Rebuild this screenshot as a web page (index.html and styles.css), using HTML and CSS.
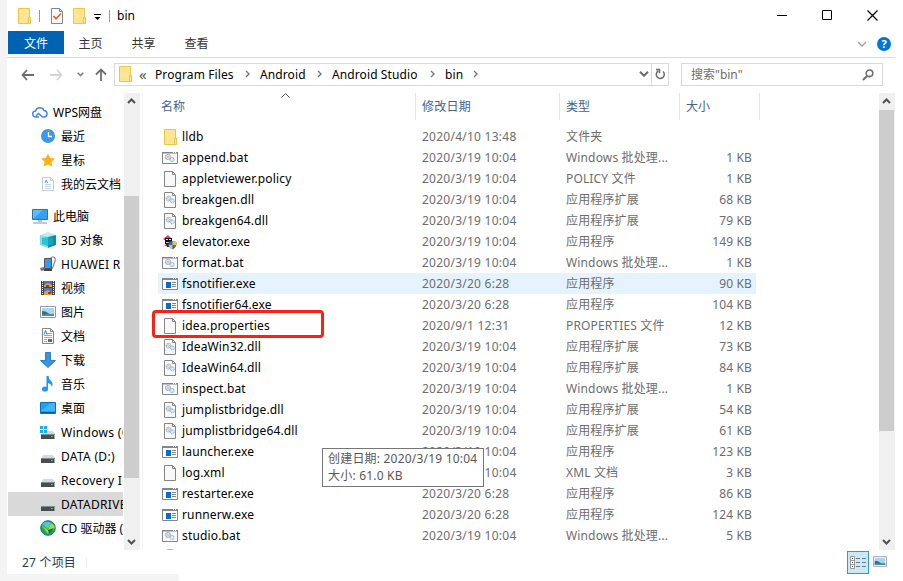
FILE: index.html
```html
<!DOCTYPE html>
<html lang="zh-CN">

<head>
    <meta charset="UTF-8">
    <meta name="viewport" content="width=device-width, initial-scale=1.0">
    <title>bin</title>
    <link rel="stylesheet" href="styles.css">
</head>

<body>
    <!-- Shared icons -->
    <svg class="sprite" width="0" height="0">
        <symbol id="i-folder" viewBox="0 0 16 16">
            <path d="M2.5.5h11v9h1v6h-12z" fill="#ffe591" stroke="#ecc648" />
            <path d="M12.5 15.5v-6h2v6z" fill="#ffe591" stroke="#ecc648" />
        </symbol>
        <symbol id="i-file" viewBox="0 0 16 16">
            <path d="M2.5.5h8l3 3v12h-11z" fill="#f9f9f9" stroke="#858585" />
            <path d="M10.5.5v3h3" fill="none" stroke="#858585" />
        </symbol>
        <symbol id="i-gears" viewBox="0 0 16 16">
            <circle cx="6" cy="6" r="2.5" fill="#eceeef" stroke="#9aa2a8" stroke-width="1.2" stroke-dasharray="1.2 .5" />
            <circle cx="6" cy="6" r=".9" fill="#fff" stroke="#9aa2a8" stroke-width=".6" />
            <circle cx="10" cy="8.500" r="2" fill="#e2eff8" stroke="#94b8d0" stroke-width="1.200" stroke-dasharray="1.100 .5" />
        </symbol>
        <symbol id="i-bat" viewBox="0 0 16 16">
            <path d="M.5 2.5h15v11H.5z" fill="#fafafa" stroke="#80868b" />
            <path d="M0 2h16v1.500H0z" fill="#80868b" />
            <path d="M11 2.5h1M13 2.5h1" stroke="#fff" />
            <use href="#i-gears" y="1" width="16" height="16" />
        </symbol>
        <symbol id="i-dll" viewBox="0 0 16 16">
            <use href="#i-file" width="16" height="16" />
            <use href="#i-gears" x="1" y="1" width="15" height="15" />
        </symbol>
        <symbol id="i-exe" viewBox="0 0 16 16">
            <path d="M.5 2.5h15v11H.5z" fill="#fff" stroke="#80868b" />
            <path d="M0 2h16v2H0z" fill="#80868b" />
            <path d="M11 2.5h1M13 2.5h1" stroke="#fff" />
            <path d="M4 6h5v6H4z" fill="#0a6cce" />
            <path d="M10 6.5h4M10 8.5h4M10 10.5h4" stroke="#80868b" />
        </symbol>
        <symbol id="i-elevator" viewBox="0 0 16 16">
            <path d="M1 5l5-4 3 3-5 3z" fill="#f5316f" />
            <path d="M3 4h7v6H3z" fill="#111" />
            <path d="M4 5.500h2M7 5.500h2M4 8.500h3" stroke="#ddd" />
            <path d="M2 11l5-1 1 3-4-1z" fill="#c42a4f" />
            <path d="M4 10h4v3H5z" fill="#333" />
            <path d="M10.500 7l4 1v3q-1 3-4 4.500-3-1.500-4-4.500V8z" fill="#1d6fc6" />
            <path d="M10.500 7l4 1v3h-4zM6.500 11h4v4.500q-3-1.500-4-4.500z" fill="#fcc12c" />
        </symbol>
        <symbol id="i-drive" viewBox="0 0 16 16">
            <path d="M3.500 7h9L15 10H1z" fill="#d5d8da" />
            <path d="M1 10h13.500v5H1z" fill="#4a4d50" />
            <path d="M1 10.500h13.500" stroke="#858a8d" />
            <path d="M11 12h1.500v1H11z" fill="#5dee6b" />
        </symbol>
        <symbol id="i-picture" viewBox="0 0 16 12">
            <path d="M.5.5h15v11H.5z" fill="#fff" stroke="#999" />
            <path d="M2 2h12v8H2z" fill="#a7d5f5" />
            <path d="M2 5q4 0 6 2t6 1v2H2z" fill="#3c7062" />
            <path d="M2 8.500q6-1 12 0V10H2z" fill="#4e8db8" />
        </symbol>
        <symbol id="i-up" viewBox="0 0 16 16">
            <path d="M4 10l3.500-3.500L11 10" fill="none" stroke="#505050" stroke-width="2" />
        </symbol>
        <symbol id="i-down" viewBox="0 0 16 16">
            <path d="M4 6l3.500 3.500L11 6" fill="none" stroke="#505050" stroke-width="2" />
        </symbol>
        <symbol id="i-sep" viewBox="0 0 6 10">
            <path d="M1 2l3 3-3 3" fill="none" stroke="#777" stroke-width="1.4" />
        </symbol>
    </svg>

    <div class="desktop">
        <div class="window">
            <div class="title-bar">
                <svg class="icon"><use href="#i-folder" /></svg>
                <span class="bar first"></span>
                <svg class="icon check" viewBox="0 0 16 16">
                    <path d="M2.5.5h8l3 3v12h-11z" fill="#f9f9f9" stroke="#858585" />
                    <path d="M10.5.5v3h3" fill="none" stroke="#858585" />
                    <path d="M4.5 8l2.500 2.800 5-5.300" fill="none" stroke="#ef5b20" stroke-width="1.6" />
                </svg>
                <svg class="icon folder-two"><use href="#i-folder" /></svg>
                <svg class="drop" width="7" height="6" viewBox="0 0 7 6">
                    <path d="M0 .5h7" stroke="#000" />
                    <path d="M.5 3h6l-3 3z" />
                </svg>
                <span class="bar second"></span>
                <span class="title">bin</span>
                <div class="buttons">
                    <svg width="11" height="11"><path d="M0 5.500h10" stroke="#000" /></svg>
                    <svg width="11" height="11"><path d="M.5.5h9v9h-9z" fill="none" stroke="#000" /></svg>
                    <svg width="11" height="11"><path d="M.5.5l10 10M10.500.5l-10 10" stroke="#000" stroke-width="1.2" /></svg>
                </div>
            </div>

            <div class="tabs">
                <span class="tab active">文件</span>
                <span class="tab">主页</span>
                <span class="tab">共享</span>
                <span class="tab">查看</span>
                <div class="tabs-right">
                    <svg width="10" height="6"><path d="M1 1l4 4 4-4" fill="none" stroke="#a0a0a0" stroke-width="1.3" /></svg>
                    <span class="help">?</span>
                </div>
            </div>

            <div class="nav">
                <div class="arrows">
                    <svg width="13" height="12"><path d="M6 1L1.500 6 6 11M1.500 6H13" fill="none" stroke="#6e6e6e" stroke-width="1.8" /></svg>
                    <svg width="13" height="12"><path d="M7 1l4.500 5L7 11M11.500 6H0" fill="none" stroke="#d5d5d5" stroke-width="1.8" /></svg>
                    <svg width="7" height="5"><path d="M.7.7l2.800 2.800L6.300.7" fill="none" stroke="#808080" stroke-width="1.6" /></svg>
                    <svg width="12" height="13"><path d="M1 6.500L6 1.500l5 5M6 1.500V13" fill="none" stroke="#6e6e6e" stroke-width="1.8" /></svg>
                </div>
                <div class="address">
                    <svg class="icon"><use href="#i-folder" /></svg>
                    <span class="more">«</span>
                    <span class="crumb program">Program Files</span>
                    <svg class="sep"><use href="#i-sep" /></svg>
                    <span class="crumb android">Android</span>
                    <svg class="sep"><use href="#i-sep" /></svg>
                    <span class="crumb studio">Android Studio</span>
                    <svg class="sep"><use href="#i-sep" /></svg>
                    <span class="crumb last">bin</span>
                    <svg class="sep"><use href="#i-sep" /></svg>
                    <div class="address-right">
                        <svg width="10" height="6"><path d="M1 .8L5 4.800l4-4" fill="none" stroke="#6e6e6e" stroke-width="2" /></svg>
                        <span class="refresh">
                            <svg width="11" height="12"><path d="M8 3.500A4 4 0 1 1 3.200 3M1 1.500h3.500v3.700" fill="none" stroke="#6e6e6e" stroke-width="1.5" /></svg>
                        </span>
                    </div>
                </div>
                <div class="search">
                    <span>搜索"bin"</span>
                    <svg width="12" height="12"><circle cx="7.5" cy="4.3" r="3.3" fill="none" stroke="#6e6e6e" stroke-width="1.6" /><path d="M5 7L1 11" stroke="#6e6e6e" stroke-width="2" /></svg>
                </div>
            </div>

            <div class="main">
                <div class="tree">
                    <div class="node root">
                        <svg class="icon" viewBox="0 0 16 16"><path d="M7 13H4A3 3 0 0 1 3.500 7 4.500 4.500 0 0 1 12 6.500a3.300 3.300 0 0 1 .5 6.500h-2L6.500 9.500 4 12" fill="none" stroke="#4a83ee" stroke-width="1.5" /></svg>
                        <span>WPS网盘</span>
                    </div>
                    <div class="node">
                        <svg class="icon" viewBox="0 0 16 16"><circle cx="8" cy="8" r="7" fill="#3d99e8" /><path d="M8.500 4v4.500H12" fill="none" stroke="#fff" stroke-width="1.3" /></svg>
                        <span>最近</span>
                    </div>
                    <div class="node">
                        <svg class="icon" viewBox="0 0 16 16"><path d="M8 1.500l2.100 4.400 4.900.6-3.600 3.400 1 4.900L8 12.400l-4.400 2.400 1-4.900L1 6.500l4.900-.6z" fill="#ffb017" /></svg>
                        <span>星标</span>
                    </div>
                    <div class="node">
                        <svg class="icon" viewBox="0 0 16 16"><path d="M2.500 1.500h8l3 3v10h-11z" fill="#fff" stroke="#c8ccd0" /><path d="M10.500 1.500v3h3" fill="none" stroke="#c8ccd0" /><path d="M5 8.500h6M5 10.500h6M5 12.500h6" stroke="#c0d7ee" /><path d="M5 7l1.300-3L7.500 7" fill="none" stroke="#5096dc" /></svg>
                        <span>我的云文档</span>
                    </div>
                    <div class="node root computer">
                        <svg class="icon" viewBox="0 0 16 16"><path d="M.5 1.500h15v10H.5z" fill="#5abcf8" stroke="#38729b" /><path d="M1 11L11 2h4v9z" fill="#35a0ee" /><path d="M6 12h4v2H6z" fill="#b8c6d0" /><path d="M1 15h14" stroke="#8098a8" /></svg>
                        <span>此电脑</span>
                    </div>
                    <div class="node">
                        <svg class="icon" viewBox="0 0 16 16"><path d="M0 3l8-3 8 3-8 3z" fill="#b9eff4" /><path d="M0 3l8 2v11l-8-3z" fill="#7fdde6" /><path d="M16 3L8 5v11l8-3z" fill="#0a8fa6" /><path d="M2 6l6-1v9l-6-2z" fill="#31c1d3" /><path d="M8 5l5 1v6l-5 2z" fill="#16a5ba" /></svg>
                        <span>3D 对象</span>
                    </div>
                    <div class="node latin">
                        <svg class="icon" viewBox="0 0 16 16"><path d="M10 5q0-4 3-4t2 4-3 8" fill="none" stroke="#888" stroke-width="1.2" /><path d="M4.500 2.500h7v10h-7z" fill="#2d9fee" stroke="#555" /><path d="M0 12l4-1 1 3-4 1z" fill="#777" /><path d="M4 13h8v2H4z" fill="#444" /></svg>
                        <span>HUAWEI R</span>
                    </div>
                    <div class="node">
                        <svg class="icon" viewBox="0 0 16 16"><path d="M1 1h14v14H1z" fill="#444" /><path d="M4 1h8v6H4zM4 8h8v7H4z" fill="#4278ce" /><path d="M4 5l4-2 4 2v2H4zM4 12l4-2 4 3v2H4z" fill="#e2a22e" /><path d="M6 5h3v2H6zM8 12h3v2H8z" fill="#a6342a" /><path d="M2.500 1v14M13.500 1v14" stroke="#fff" stroke-dasharray="1 1" /></svg>
                        <span>视频</span>
                    </div>
                    <div class="node">
                        <svg class="icon"><use href="#i-picture" /></svg>
                        <span>图片</span>
                    </div>
                    <div class="node">
                        <svg class="icon" viewBox="0 0 16 16"><path d="M2.500.5h8l3 3v12h-11z" fill="#fff" stroke="#858585" /><path d="M10.500.5v3h3" fill="none" stroke="#858585" /><path d="M7 5.500h5M4 7.500h8M4 9.500h8M4 11.500h3M4 13.500h3" stroke="#71b5e0" /><path d="M4 6.500l1.500-4 1.500 4" fill="none" stroke="#1687ce" /><path d="M8 11h4v3H8z" fill="#557078" /></svg>
                        <span>文档</span>
                    </div>
                    <div class="node">
                        <svg class="icon" viewBox="0 0 16 16"><path d="M5.500.5h5v8h5L8 15.500.5 8.500h5z" fill="#3794e3" stroke="#2d7fc9" /></svg>
                        <span>下载</span>
                    </div>
                    <div class="node">
                        <svg class="icon" viewBox="0 0 16 16"><ellipse cx="5" cy="13" rx="3" ry="2.6" fill="#169bf5" /><path d="M6.500 0h2q0 3 2.500 5t1 6q-.5-3-4-4v6H6.500z" fill="#169bf5" /></svg>
                        <span>音乐</span>
                    </div>
                    <div class="node">
                        <svg class="icon" viewBox="0 0 16 16"><path d="M.5 2.500h15v11H.5z" fill="#1ba1f5" stroke="#0b70b8" /><path d="M1 11L11 3h4v8z" fill="#42b5fa" /><path d="M1 12.500h14" stroke="#085c9b" /></svg>
                        <span>桌面</span>
                    </div>
                    <div class="node latin">
                        <svg class="icon" viewBox="0 0 16 16"><use href="#i-drive" width="16" height="16" /><path d="M0 2h3v3H0zM4 2h3v3H4zM0 6h3v3H0zM4 6h3v3H4z" fill="#16b0ee" /></svg>
                        <span>Windows (C:)</span>
                    </div>
                    <div class="node latin">
                        <svg class="icon"><use href="#i-drive" /></svg>
                        <span>DATA (D:)</span>
                    </div>
                    <div class="node latin">
                        <svg class="icon"><use href="#i-drive" /></svg>
                        <span>Recovery Image</span>
                    </div>
                    <div class="node latin selected">
                        <svg class="icon"><use href="#i-drive" /></svg>
                        <span>DATADRIVE</span>
                    </div>
                    <div class="node">
                        <svg class="icon" viewBox="0 0 16 16"><circle cx="8" cy="8" r="7.3" fill="#1ba364" stroke="#17718a" /><path d="M1.500 5l6.500 5 3-7q3 1 4 5l-7 6z" fill="#a6db24" /><path d="M2 4q5-4 9-1L8 9z" fill="#57c4dd" /><path d="M8 10l6-2-5 6z" fill="#0b6c57" /></svg>
                        <span>CD 驱动器 (</span>
                    </div>
                </div>

                <div class="scroll tree-scroll">
                    <svg class="icon"><use href="#i-up" /></svg>
                    <div class="thumb"></div>
                    <svg class="icon"><use href="#i-down" /></svg>
                </div>

                <div class="files">
                    <div class="row head">
                        <span class="name">名称<svg class="sort" width="9" height="5"><path d="M.5 4.500l4-4 4 4" fill="none" stroke="#555" /></svg></span>
                        <span class="date">修改日期</span>
                        <span class="type">类型</span>
                        <span class="size">大小</span>
                    </div>
                    <div class="row"><span class="name"><svg class="icon"><use href="#i-folder" /></svg>lldb</span><span class="date">2020/4/10 13:48</span><span class="type">文件夹</span><span class="size"></span></div>
                    <div class="row"><span class="name"><svg class="icon"><use href="#i-bat" /></svg>append.bat</span><span class="date">2020/3/19 10:04</span><span class="type">Windows 批处理...</span><span class="size">1 KB</span></div>
                    <div class="row"><span class="name"><svg class="icon"><use href="#i-file" /></svg>appletviewer.policy</span><span class="date">2020/3/19 10:04</span><span class="type">POLICY 文件</span><span class="size">1 KB</span></div>
                    <div class="row"><span class="name"><svg class="icon"><use href="#i-dll" /></svg>breakgen.dll</span><span class="date">2020/3/19 10:04</span><span class="type">应用程序扩展</span><span class="size">68 KB</span></div>
                    <div class="row"><span class="name"><svg class="icon"><use href="#i-dll" /></svg>breakgen64.dll</span><span class="date">2020/3/19 10:04</span><span class="type">应用程序扩展</span><span class="size">79 KB</span></div>
                    <div class="row"><span class="name"><svg class="icon"><use href="#i-elevator" /></svg>elevator.exe</span><span class="date">2020/3/19 10:04</span><span class="type">应用程序</span><span class="size">149 KB</span></div>
                    <div class="row"><span class="name"><svg class="icon"><use href="#i-bat" /></svg>format.bat</span><span class="date">2020/3/19 10:04</span><span class="type">Windows 批处理...</span><span class="size">1 KB</span></div>
                    <div class="row hover"><span class="name"><svg class="icon"><use href="#i-exe" /></svg>fsnotifier.exe</span><span class="date">2020/3/20 6:28</span><span class="type">应用程序</span><span class="size">90 KB</span></div>
                    <div class="row"><span class="name"><svg class="icon"><use href="#i-exe" /></svg>fsnotifier64.exe</span><span class="date">2020/3/20 6:28</span><span class="type">应用程序</span><span class="size">104 KB</span></div>
                    <div class="row marked"><span class="name"><svg class="icon"><use href="#i-file" /></svg>idea.properties</span><span class="date">2020/9/1 12:31</span><span class="type">PROPERTIES 文件</span><span class="size">12 KB</span></div>
                    <div class="row"><span class="name"><svg class="icon"><use href="#i-dll" /></svg>IdeaWin32.dll</span><span class="date">2020/3/19 10:04</span><span class="type">应用程序扩展</span><span class="size">73 KB</span></div>
                    <div class="row"><span class="name"><svg class="icon"><use href="#i-dll" /></svg>IdeaWin64.dll</span><span class="date">2020/3/19 10:04</span><span class="type">应用程序扩展</span><span class="size">84 KB</span></div>
                    <div class="row"><span class="name"><svg class="icon"><use href="#i-bat" /></svg>inspect.bat</span><span class="date">2020/3/19 10:04</span><span class="type">Windows 批处理...</span><span class="size">1 KB</span></div>
                    <div class="row"><span class="name"><svg class="icon"><use href="#i-dll" /></svg>jumplistbridge.dll</span><span class="date">2020/3/19 10:04</span><span class="type">应用程序扩展</span><span class="size">54 KB</span></div>
                    <div class="row"><span class="name"><svg class="icon"><use href="#i-dll" /></svg>jumplistbridge64.dll</span><span class="date">2020/3/19 10:04</span><span class="type">应用程序扩展</span><span class="size">61 KB</span></div>
                    <div class="row"><span class="name"><svg class="icon"><use href="#i-exe" /></svg>launcher.exe</span><span class="date">2020/3/19 10:04</span><span class="type">应用程序</span><span class="size">123 KB</span></div>
                    <div class="row"><span class="name"><svg class="icon"><use href="#i-file" /></svg>log.xml</span><span class="date">2020/3/19 10:04</span><span class="type">XML 文档</span><span class="size">3 KB</span></div>
                    <div class="row"><span class="name"><svg class="icon"><use href="#i-exe" /></svg>restarter.exe</span><span class="date">2020/3/20 6:28</span><span class="type">应用程序</span><span class="size">86 KB</span></div>
                    <div class="row"><span class="name"><svg class="icon"><use href="#i-exe" /></svg>runnerw.exe</span><span class="date">2020/3/20 6:28</span><span class="type">应用程序</span><span class="size">124 KB</span></div>
                    <div class="row"><span class="name"><svg class="icon"><use href="#i-bat" /></svg>studio.bat</span><span class="date">2020/3/19 10:04</span><span class="type">Windows 批处理...</span><span class="size">5 KB</span></div>
                    <div class="row"><span class="name"><svg class="icon" viewBox="0 0 16 16"><circle cx="8" cy="8" r="8" fill="#3ddc84" /></svg></span></div>
                </div>

                <div class="scroll file-scroll">
                    <svg class="icon"><use href="#i-up" /></svg>
                    <div class="thumb"></div>
                    <svg class="icon"><use href="#i-down" /></svg>
                </div>
            </div>

            <div class="status">
                <span class="count">27 个项目</span>
                <div class="views">
                    <span class="view active">
                        <svg width="16" height="13"><path d="M.5.5h4v12h-4zM.5 4.500h4M.5 8.500h4" fill="#fff" stroke="#999" /><path d="M6 2.500h10M6 6.500h10M6 10.500h10" stroke="#6d7b82" stroke-dasharray="4 2" /><path d="M2 2h1v1H2zM2 6h1v1H2zM2 10h1v1H2z" fill="#444" /></svg>
                    </span>
                    <svg class="thumbs" width="14" height="11"><use href="#i-picture" /></svg>
                </div>
            </div>

            <div class="tooltip">创建日期: 2020/3/19 10:04<br>大小: 61.0 KB</div>
        </div>
        <div class="strip"></div>
    </div>
</body>

</html>
```
FILE: styles.css
```css
* {
    box-sizing: border-box;
}

body {
    margin: 0;
    background-color: #fff;
    color: #000;
    font-family: "Noto Sans", "Noto Sans CJK SC", sans-serif;
    font-size: 12px;
    line-height: 17px;
    overflow: hidden;
}

svg {
    display: block;
    flex-shrink: 0;
}

.sprite {
    position: absolute;
}

.icon {
    width: 16px;
    height: 16px;
}

.desktop {
    width: 903px;
    height: 581px;
    display: flex;
    flex-direction: column;
}

.window {
    position: relative;
    height: 574px;
    border-left: 7px solid #f4f4f4;
    display: flex;
    flex-direction: column;
}

.strip {
    width: 179px;
    height: 7px;
    background-color: #f4f4f4;
}

/* Title bar */
.title-bar {
    height: 31px;
    padding: 0 25px 0 9px;
    display: flex;
    align-items: center;
}

.bar {
    width: 1px;
    height: 12px;
    background-color: #999;
}

.bar.first {
    margin-left: 7px;
}

.check {
    margin-left: 9px;
}

.folder-two {
    margin-left: 6px;
}

.drop {
    margin-left: 7px;
    margin-top: 3px;
}

.bar.second {
    margin-left: 8px;
}

.title {
    margin-left: 7px;
}

.buttons {
    margin-left: auto;
    display: flex;
    gap: 34px;
}

/* Ribbon tabs */
.tabs {
    height: 27px;
    width: 888px;
    padding-left: 1px;
    border-bottom: 1px solid #dadbdc;
    display: flex;
}

.tab {
    width: 53px;
    height: 23px;
    line-height: 25px;
    text-align: center;
    color: #333;
}

.tab.active {
    width: 56px;
    background-color: #0063b1;
    color: #fff;
}

.tabs-right {
    height: 26px;
    margin-left: auto;
    margin-right: 4px;
    display: flex;
    align-items: center;
    gap: 10px;
}

.help {
    width: 14px;
    height: 14px;
    border-radius: 50%;
    background-color: #0078d7;
    color: #fff;
    font-size: 11px;
    font-weight: bold;
    line-height: 14px;
    text-align: center;
}

/* Navigation row */
.nav {
    height: 35px;
    padding-top: 5px;
    display: flex;
}

.arrows {
    width: 107px;
    height: 23px;
    padding-left: 14px;
    display: flex;
    align-items: center;
    gap: 16px;
}

.arrows svg:nth-child(3) {
    margin-left: -2px;
}

.arrows svg:nth-child(4) {
    margin-left: -5px;
}

.address {
    width: 555px;
    height: 23px;
    padding-left: 2px;
    padding-bottom: 1px;
    border: 1px solid #d9d9d9;
    display: flex;
    align-items: center;
}

.more {
    margin-left: 6px;
    width: 16px;
    font-size: 15px;
    line-height: 18px;
    color: #555;
}

.sep {
    width: 6px;
    height: 10px;
}

.crumb {
    white-space: nowrap;
    letter-spacing: 0.1px;
}

.crumb.program {
    width: 90px;
}

.crumb.android {
    margin-left: 9px;
    width: 57px;
}

.crumb.studio {
    margin-left: 9px;
    width: 98px;
}

.crumb.last {
    margin-left: 9px;
    width: 28px;
}

.address-right {
    margin-left: auto;
    height: 21px;
    display: flex;
    align-items: center;
    gap: 2px;
}

.refresh {
    width: 17px;
    height: 21px;
    border-left: 1px solid #d9d9d9;
    display: flex;
    align-items: center;
    justify-content: center;
}

.search {
    width: 202px;
    height: 23px;
    margin-left: 12px;
    padding: 0 8px 0 9px;
    border: 1px solid #d9d9d9;
    color: #6d6d6d;
    display: flex;
    align-items: center;
    justify-content: space-between;
}

/* Folder tree */
.main {
    height: 457px;
    width: 888px;
    display: flex;
}

.tree {
    width: 117px;
    padding: 7px 1px 0;
    overflow: hidden;
}

.node {
    height: 24px;
    padding-left: 32px;
    display: flex;
    align-items: center;
    gap: 5px;
    white-space: nowrap;
    overflow: hidden;
}

.node.root {
    padding-left: 24px;
}

.node.computer {
    margin-top: 8px;
}

.node.latin {
    letter-spacing: 0.3px;
}

.node.selected {
    background-color: #d9d9d9;
}

/* Scrollbars */
.scroll {
    width: 16px;
    background-color: #f0f0f0;
    display: flex;
    flex-direction: column;
    justify-content: space-between;
}

.thumb {
    width: 15px;
    background-color: #cdcdcd;
}

.tree-scroll .thumb {
    height: 282px;
    margin-top: 87px;
    margin-bottom: auto;
}

.file-scroll .thumb {
    height: 321px;
    margin-top: 1px;
    margin-bottom: auto;
}

/* File list */
.files {
    width: 737px;
    margin-left: 2px;
    padding-left: 15px;
    border-left: 1px solid #f2f2f2;
    overflow: hidden;
}

.row {
    width: 598px;
    height: 21px;
    display: flex;
    align-items: center;
    color: #6d6d6d;
    white-space: nowrap;
    letter-spacing: 0.15px;
}

.row.hover {
    background-color: #e5f3ff;
}

.name {
    width: 258px;
    padding-left: 4px;
    display: flex;
    align-items: center;
    gap: 4px;
    color: #000;
}

.date {
    width: 144px;
    padding-left: 6px;
    letter-spacing: 0.25px;
}

.type {
    width: 120px;
    padding-left: 6px;
}

.size {
    width: 76px;
    padding-right: 4px;
    text-align: right;
}

.head {
    width: 602px;
    height: 27px;
    margin-bottom: 6px;
    color: #44648c;
    letter-spacing: 0;
}

.head span {
    height: 27px;
    line-height: 27px;
    border-right: 1px solid #e5e5e5;
}

.head .name {
    padding-left: 3px;
    align-items: flex-start;
    color: #44648c;
}

.head .size {
    width: 80px;
    padding-left: 6px;
    text-align: left;
}

.sort {
    margin-left: 92px;
}

/* Red frame around the file to edit */
.marked {
    position: relative;
}

.marked::before {
    content: "";
    box-sizing: border-box;
    position: absolute;
    left: -6px;
    top: -5px;
    width: 172px;
    height: 28px;
    border: 3px solid #fd2115;
    border-radius: 4px;
}

/* Status bar */
.status {
    height: 24px;
    padding-left: 15px;
    padding-right: 16px;
    display: flex;
    align-items: center;
    color: #1e395b;
}

.count {
    width: 65px;
    height: 11px;
    line-height: 11px;
    border-right: 1px solid #f0f0f0;
    white-space: nowrap;
    letter-spacing: 0.2px;
}

.views {
    margin-left: auto;
    display: flex;
    align-items: center;
    gap: 4px;
}

.thumbs {
    margin-bottom: 2px;
}

.view.active {
    width: 22px;
    height: 23px;
    border: 1px solid #26a0da;
    background-color: #cbe8f6;
    display: flex;
    align-items: center;
    justify-content: center;
}

.tooltip {
    position: absolute;
    left: 315px;
    top: 448px;
    width: 162px;
    height: 39px;
    padding: 1px 5px;
    border: 1px solid #767676;
    background-color: #fff;
    color: #575757;
    line-height: 17px;
    letter-spacing: 0.2px;
    white-space: nowrap;
}
```
